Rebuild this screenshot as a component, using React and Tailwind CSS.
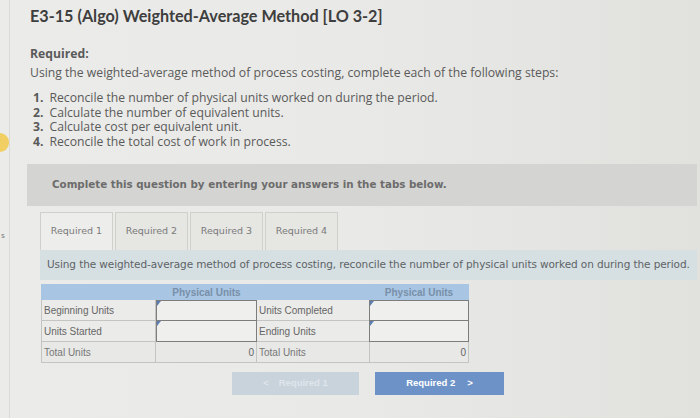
export default function App() {
  const tabs = ["Required 1", "Required 2", "Required 3", "Required 4"];
  const Marker = () => (
    <span className="absolute left-0 top-0 w-0 h-0 border-t-[5px] border-t-[#5b7fb0] border-r-[4px] border-r-transparent" />
  );
  return (
    <div
      className="w-[700px] h-[418px] overflow-hidden flex bg-gradient-to-r from-[#ebebe9] via-[#e9e9e7] to-[#e1e1de] text-[#4a4a4a]"
      style={{ fontFamily: "'Open Sans', Lato, sans-serif" }}
    >
      <div className="w-[10px] shrink-0 relative border-r border-[#dadad7]">
        <div className="absolute left-[-9px] top-[133px] w-[18px] h-[19px] rounded-full bg-[#f2cf63]" />
        <div className="absolute left-[1px] top-[229px] text-[8px] text-[#777]">s</div>
      </div>
      <div className="flex-1 pl-[17px] pr-[3px]">
        <h1
          className="mt-[5px] ml-[3px] text-[16.2px] leading-[22px] font-bold text-[#3e3e3e]"
          style={{ fontFamily: "Lato, 'Open Sans', sans-serif" }}
        >
          E3-15 (Algo) Weighted-Average Method [LO 3-2]
        </h1>
        <div className="ml-[3px] mt-[18px] text-[12.2px] leading-[17px] text-[#5a5a5a]">
          <div className="font-bold">Required:</div>
          <div className="mt-[2px]">Using the weighted-average method of process costing, complete each of the following steps:</div>
          <ol className="mt-[10px] ml-[3px] leading-[14.5px]">
            <li><b className="mr-[6px]">1.</b>Reconcile the number of physical units worked on during the period.</li>
            <li><b className="mr-[6px]">2.</b>Calculate the number of equivalent units.</li>
            <li><b className="mr-[6px]">3.</b>Calculate cost per equivalent unit.</li>
            <li><b className="mr-[6px]">4.</b>Reconcile the total cost of work in process.</li>
          </ol>
        </div>
        <div
          className="mt-[15px] h-[42px] bg-[#d4d4d2] flex items-center pl-[25px] text-[10.3px] font-bold text-[#6c6c6c]"
          style={{ fontFamily: "'DejaVu Sans', Verdana, sans-serif" }}
        >
          Complete this question by entering your answers in the tabs below.
        </div>
        <div className="ml-[13px] mt-[6px]" style={{ fontFamily: "'DejaVu Sans', Verdana, sans-serif" }}>
          <div className="flex h-[38px] gap-[2px]">
            {tabs.map((t, i) => (
              <div
                key={t}
                className={
                  "h-full flex items-center justify-center text-[9.5px] text-[#7a7a7a] border border-[#cfcfcc] border-b-0 " +
                  (i === 0 ? "w-[73px] bg-[#ededeb]" : "w-[73px] bg-[#e6e6e3]")
                }
              >
                {t}
              </div>
            ))}
          </div>
          <div className="h-[30px] bg-[#d6e0e3] flex items-center pl-[7px] text-[10.5px] text-[#5e6366] tracking-[-0.1px] whitespace-nowrap">
            Using the weighted-average method of process costing, reconcile the number of physical units worked on during the period.
          </div>
          <div className="mt-[4px] ml-[1px]" style={{ fontFamily: "'Liberation Sans', Arial, sans-serif" }}>
            <div className="w-[428px] grid grid-cols-[115px_101px_112px_100px] text-[10px]">
              <div className="h-[16px] bg-[#a8c5e4]" />
              <div className="h-[16px] bg-[#a8c5e4] flex items-center justify-center font-bold text-[#7890a8]">Physical Units</div>
              <div className="h-[16px] bg-[#a8c5e4]" />
              <div className="h-[16px] bg-[#a8c5e4] flex items-center justify-center font-bold text-[#7890a8]">Physical Units</div>

              <div className="h-[21px] border border-t-0 border-[#c4c4c2] bg-[#ebebe9] flex items-center pl-[2px] text-[#666]">Beginning Units</div>
              <div className="h-[21px] relative border border-[#7d7d7d] bg-[#efefed]"><Marker /></div>
              <div className="h-[21px] border-b border-[#c4c4c2] bg-[#ebebe9] flex items-center pl-[2px] text-[#666]">Units Completed</div>
              <div className="h-[21px] relative border border-[#7d7d7d] bg-[#efefed]"><Marker /></div>

              <div className="h-[21px] border border-t-0 border-[#c4c4c2] bg-[#ebebe9] flex items-center pl-[2px] text-[#666]">Units Started</div>
              <div className="h-[21px] relative border border-t-0 border-[#7d7d7d] bg-[#efefed]"><Marker /></div>
              <div className="h-[21px] border-b border-[#c4c4c2] bg-[#ebebe9] flex items-center pl-[2px] text-[#666]">Ending Units</div>
              <div className="h-[21px] relative border border-t-0 border-[#7d7d7d] bg-[#efefed]"><Marker /></div>

              <div className="h-[21px] border border-t-0 border-[#c4c4c2] bg-[#e8e8e6] flex items-center pl-[2px] text-[#777]">Total Units</div>
              <div className="h-[21px] border-b border-r border-[#c4c4c2] bg-[#e8e8e6] flex items-center justify-end pr-[2px] text-[#666]">0</div>
              <div className="h-[21px] border-b border-[#c4c4c2] bg-[#e8e8e6] flex items-center pl-[2px] text-[#777]">Total Units</div>
              <div className="h-[21px] border-b border-x border-[#c4c4c2] bg-[#e8e8e6] flex items-center justify-end pr-[2px] text-[#666]">0</div>
            </div>
            <div className="flex ml-[191px] mt-[9px] gap-[16px]">
              <div className="w-[127px] h-[23px] bg-[#c9d3dc] flex items-center justify-center gap-[10px] text-[9.5px] font-bold text-[#dfe5ea]">
                <span>&lt;</span><span>Required 1</span>
              </div>
              <div className="w-[129px] h-[23px] bg-[#6c92c8] flex items-center justify-center gap-[12px] text-[9.5px] font-bold text-white">
                <span>Required 2</span><span>&gt;</span>
              </div>
            </div>
          </div>
        </div>
      </div>
    </div>
  );
}
